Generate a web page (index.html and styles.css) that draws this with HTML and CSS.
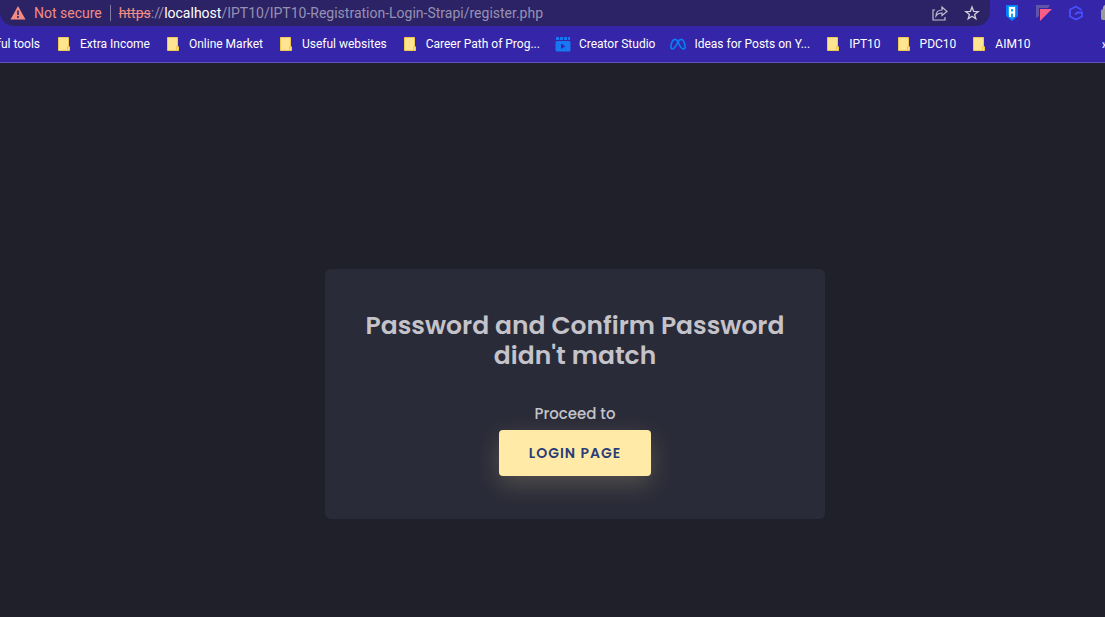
FILE: index.html
```html
<!DOCTYPE html>
<html lang="en">
<head>
<meta charset="utf-8">
<title>Register</title>
<link rel="stylesheet" href="styles.css">
</head>
<body>
<svg class="symbols" aria-hidden="true">
  <symbol id="folder" viewBox="0 0 16 16"><path d="M2.500 1.500h10v9.500h1v3.500h-11z" fill="#ffe591" stroke="#f2c94e"/><path d="M11.500 14v-3.500h2" fill="none" stroke="#f2c94e"/></symbol>
</svg>
<header class="browser">
  <div class="toolbar">
    <div class="omnibox">
      <svg class="warning" viewBox="0 0 16 16" aria-hidden="true"><path d="M8 1 15.500 14.500H.5z" fill="#f28b82"/><path d="M8 5.500v4.500M8 11v2" stroke="#2c2366" stroke-width="1.600"/></svg>
      <span class="insecure">Not secure</span>
      <span class="divider"></span>
      <span class="url"><s>https</s>://<b>localhost</b>/IPT10/IPT10-Registration-Login-Strapi/register.php</span>
      <button class="icon-button" aria-label="Share"><svg viewBox="0 0 16 16"><path d="M3 5H1v10h12v-3M4 11c0-4 2.500-6 6-6V2l5 4.500-5 4V8C7.500 8 5.500 8.500 4 11z" fill="none" stroke="#c2bfd0" stroke-width="1.200"/></svg></button>
      <button class="icon-button" aria-label="Bookmark"><svg viewBox="0 0 16 16"><path d="m8 2 1.600 4.300 4.600.2-3.600 2.900 1.200 4.400L8 11.300l-3.800 2.500 1.200-4.400-3.600-2.900 4.600-.2z" fill="none" stroke="#d2cfdc" stroke-width="1.300"/></svg></button>
    </div>
    <div class="extensions">
      <button class="icon-button" aria-label="Shield extension"><svg viewBox="0 0 16 16"><path d="M2 0h12v11l-6 5-6-5z" fill="#087cff"/><path d="M4 1h8v9l-4 4-4-4z" fill="#19a5f5"/><path d="M6 12V3h4v9M6 7.500h4" fill="none" stroke="#fff" stroke-width="2"/></svg></button>
      <button class="icon-button" aria-label="Triangle extension"><svg viewBox="0 0 16 16"><path d="M0 0h14l-2 3H3v8l-3 2z" fill="#6254a8"/><path d="M4 4h12L4 16z" fill="#fb5d87"/></svg></button>
      <button class="icon-button" aria-label="Hexagon extension"><svg viewBox="0 0 16 16"><path d="M13.500 5 8 1.500l-6 3v7l6 3 6-3V7.500H9.500l-2.500 2" fill="none" stroke="#4850ff" stroke-width="1.800"/></svg></button>
      <button class="icon-button" aria-label="Lock extension"><svg viewBox="0 0 16 16"><path d="M4 5V3q0-2 2-2h4v4" fill="none" stroke="#aaa" stroke-width="2"/><rect x="1" y="4" width="14" height="11" rx="2" fill="#999"/><path d="M5 6h5v6H5z" fill="#ddd"/></svg></button>
    </div>
  </div>
  <nav class="bookmarks" aria-label="Bookmarks">
    <a class="clipped" href="#">ful tools</a>
    <a href="#"><svg><use href="#folder"/></svg>Extra Income</a>
    <a href="#"><svg><use href="#folder"/></svg>Online Market</a>
    <a href="#"><svg><use href="#folder"/></svg>Useful websites</a>
    <a href="#"><svg><use href="#folder"/></svg>Career Path of Prog...</a>
    <a href="#"><svg viewBox="0 0 16 16"><rect x=".5" y="5" width="15" height="10.500" rx="1.500" fill="#1877f2"/><path d="M1 2.500h14" stroke="#1877f2" stroke-width="3" stroke-dasharray="3 1"/><path d="m6 7.500 4.500 2.700L6 13z" fill="#3525a8"/></svg>Creator Studio</a>
    <a href="#"><svg viewBox="0 0 16 16"><path d="M8 6C6.500 2.500 3.500 2.500 2 6c-1.500 4-1.500 7 .5 7S6 9.500 8 6s4.500-3.500 6 0c1.500 4 1.500 7-.5 7S9.500 9.500 8 6z" fill="none" stroke="#0880fa" stroke-width="1.600"/></svg>Ideas for Posts on Y...</a>
    <a href="#"><svg><use href="#folder"/></svg>IPT10</a>
    <a href="#"><svg><use href="#folder"/></svg>PDC10</a>
    <a href="#"><svg><use href="#folder"/></svg>AIM10</a>
    <button class="more" aria-label="More bookmarks">»</button>
  </nav>
</header>
<main class="page">
  <section class="card">
    <h1>Password and Confirm Password didn't match</h1>
    <p>Proceed to</p>
    <a class="login" href="#">Login page</a>
  </section>
</main>
</body>
</html>
```
FILE: styles.css
```css
* { box-sizing: border-box; }
body {
  margin: 0;
  min-height: 100vh;
  display: flex;
  flex-direction: column;
  overflow: hidden;
  background: #1f2029;
  font-family: Roboto, sans-serif;
}
.symbols { display: none; }
.browser { background: #3525a8; border-bottom: 1px solid #6353bd; }
.toolbar { display: flex; height: 26px; overflow: hidden; }
.omnibox {
  flex: 1;
  min-width: 0;
  display: flex;
  align-items: center;
  padding: 0 10px;
  border-radius: 0 0 14px 14px;
  background: #2c2366;
  font-size: 14px;
  line-height: 24px;
  white-space: nowrap;
}
.warning { width: 16px; height: 16px; margin-right: 8px; }
.insecure { color: #f28b82; }
.divider { width: 1px; height: 16px; margin: 0 8px; background: #817baa; }
.url { flex: 1; color: #9691b3; }
.url s { color: #f28b82; }
.url b { color: #fff; font-weight: 400; }
.icon-button { display: flex; padding: 0; border: 0; background: none; }
.icon-button svg { width: 16px; height: 16px; }
.omnibox .icon-button { margin-left: 16px; }
.extensions { display: flex; align-items: center; gap: 16px; margin: 0 -11px 0 14px; }
.bookmarks {
  display: flex;
  align-items: center;
  gap: 15px;
  height: 36px;
  overflow: hidden;
  font-size: 12px;
  line-height: 16px;
  white-space: nowrap;
}
.bookmarks a { display: flex; align-items: center; gap: 8px; color: #fff; text-decoration: none; }
.bookmarks a svg { width: 16px; height: 16px; }
.bookmarks .clipped { width: 41px; padding-right: 1px; justify-content: flex-end; }
.more { margin: 0 -3px 0 auto; padding: 0; border: 0; background: none; color: #fff; font: inherit; font-size: 14px; }
.page {
  flex: 1;
  display: flex;
  align-items: center;
  justify-content: center;
  padding: 108px 0 0 45px;
}
.card {
  width: 500px;
  padding: 42px 36px 43px;
  border-radius: 6px;
  background: #2a2b38;
  color: #c4c3ca;
  font-family: Poppins, Inter, sans-serif;
  text-align: center;
}
h1 { margin: 0 0 31px; font-size: 25px; line-height: 30px; font-weight: 600; }
p { margin: 0 0 4px; font-size: 15px; line-height: 24px; font-weight: 500; }
.login {
  display: inline-flex;
  align-items: center;
  height: 46px;
  padding: 0 30px;
  border-radius: 4px;
  background: #ffeba7;
  box-shadow: 0 8px 24px rgba(255, 235, 167, .2);
  color: #2b3d78;
  font-size: 14px;
  font-weight: 600;
  letter-spacing: 1px;
  text-decoration: none;
  text-transform: uppercase;
}
```
